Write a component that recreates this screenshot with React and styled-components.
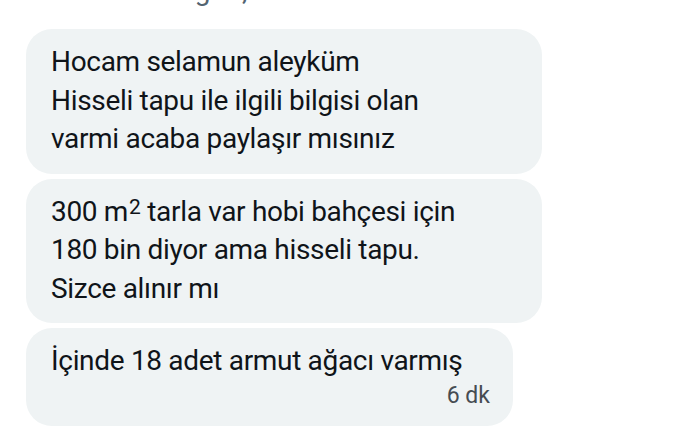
import React from "react";
import styled, { createGlobalStyle } from "styled-components";

const Global = createGlobalStyle`
  html, body { margin: 0; padding: 0; background: #ffffff; }
  body { font-family: Roboto, "Noto Sans", "Liberation Sans", sans-serif; }
`;

const Thread = styled.div`
  display: flex;
  flex-direction: column;
  align-items: flex-start;
  gap: 5px;
  padding: 0 0 0 26px;
`;

const DateClip = styled.div`
  align-self: stretch;
  height: 9px;
  margin: 0 0 15px -26px;
  padding-left: 178px;
  overflow: hidden;
  display: flex;
`;

const DateText = styled.div`
  margin-top: -23px;
  font-size: 28px;
  line-height: 28px;
  color: #536471;
  white-space: nowrap;
  letter-spacing: -1.6px;
`;

const Bubble = styled.div`
  box-sizing: border-box;
  width: ${(p) => p.$width}px;
  background: #eff3f4;
  border-radius: 26px;
  padding: 14px 23px 15px 25px;
  color: #0f1419;
  font-size: 28px;
  line-height: 38.5px;
  letter-spacing: -0.32px;
`;

const Line = styled.div`
  white-space: nowrap;
`;

const Sup = styled.span`
  font-size: 21px;
  line-height: 0;
  vertical-align: 7px;
  margin-left: 1px;
`;

const Time = styled.div`
  text-align: right;
  font-size: 23px;
  line-height: 30px;
  letter-spacing: 0;
  color: #464c52;
`;

const messages = [
  {
    width: 516,
    lines: [
      "Hocam selamun aleyküm",
      "Hisseli tapu ile ilgili bilgisi olan",
      "varmi acaba paylaşır mısınız",
    ],
  },
  {
    width: 516,
    lines: [
      <>
        300 m<Sup>2</Sup> tarla var hobi bahçesi için
      </>,
      "180 bin diyor ama hisseli tapu.",
      "Sizce alınır mı",
    ],
  },
  {
    width: 487,
    lines: ["İçinde 18 adet armut ağacı varmış"],
    time: "6 dk",
  },
];

export default function App() {
  return (
    <>
      <Global />
      <Thread>
        <DateClip>
          <DateText>Ağu 3, 2023</DateText>
        </DateClip>
        {messages.map((m, i) => (
          <Bubble key={i} $width={m.width}>
            {m.lines.map((l, j) => (
              <Line key={j}>{l}</Line>
            ))}
            {m.time && <Time>{m.time}</Time>}
          </Bubble>
        ))}
      </Thread>
    </>
  );
}
